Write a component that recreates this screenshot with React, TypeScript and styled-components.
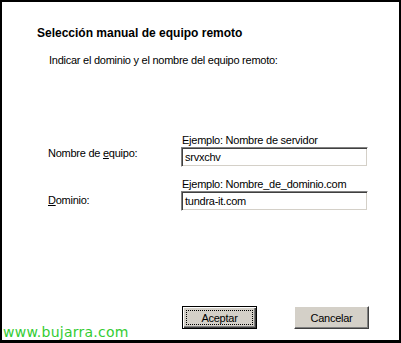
import React from "react";
import styled, { createGlobalStyle } from "styled-components";

const Global = createGlobalStyle`
  html, body { margin: 0; padding: 0; background: #ffffff; }
  body { font-family: "Liberation Sans", Arial, sans-serif; }
`;

const Dialog = styled.div`
  position: relative;
  box-sizing: border-box;
  width: 401px;
  height: 343px;
  border: 2px solid #000;
  border-bottom-width: 3px;
  background: #fff;
  display: flex;
  flex-direction: column;
  padding: 24px 30px 11px 0;
  color: #000;
  font-size: 11px;
  letter-spacing: -0.25px;
`;

const Title = styled.h1`
  margin: 0 0 0 35px;
  font-size: 12px;
  line-height: 14px;
  font-weight: bold;
  letter-spacing: 0;
`;

const Subtitle = styled.p`
  margin: 14px 0 0 47px;
  line-height: 13px;
`;

const Form = styled.div`
  margin: 67px 0 0 46px;
  display: flex;
  flex-direction: column;
  gap: 11px;
`;

const Row = styled.div`
  display: flex;
  align-items: flex-start;
`;

const Label = styled.label<{ $offset: number }>`
  width: 133px;
  line-height: 13px;
  padding-top: ${(p) => p.$offset}px;
`;

const Field = styled.div`
  display: flex;
  flex-direction: column;
  width: 187px;
`;

const Hint = styled.span`
  line-height: 13px;
  padding-left: 1px;
`;

const Edit = styled.div`
  box-sizing: border-box;
  height: 20px;
  border: 1px solid;
  border-color: #808080 #ffffff #ffffff #808080;
  box-shadow: inset 1px 1px #404040, inset -1px -1px #d4d0c8;
  background: #fff;
  padding: 0 3px;
  line-height: 18px;
`;

const Buttons = styled.div`
  margin-top: auto;
  display: flex;
  justify-content: flex-end;
  gap: 37px;
`;

const Button = styled.div<{ $default?: boolean }>`
  box-sizing: border-box;
  width: 75px;
  height: 23px;
  background: #d4d0c8;
  display: flex;
  align-items: center;
  justify-content: center;
  border: 1px solid;
  border-color: ${(p) => (p.$default ? "#000" : "#ffffff #404040 #404040 #ffffff")};
  box-shadow: ${(p) =>
    p.$default
      ? "inset 1px 1px #ffffff, inset -1px -1px #404040, inset -2px -2px #808080"
      : "inset -1px -1px #808080"};
  padding: ${(p) => (p.$default ? "3px" : "0")};
`;

const Focus = styled.span`
  box-sizing: border-box;
  flex: 1;
  align-self: stretch;
  display: flex;
  align-items: center;
  justify-content: center;
  border: 1px dotted #000;
`;

const Watermark = styled.span`
  position: absolute;
  left: 1px;
  bottom: 0;
  font-family: "DejaVu Sans", Verdana, sans-serif;
  font-size: 14px;
  line-height: 16px;
  letter-spacing: 0.25px;
  color: #33cc33;
`;

export default function App() {
  return (
    <>
      <Global />
      <Dialog>
        <Title>Selección manual de equipo remoto</Title>
        <Subtitle>Indicar el dominio y el nombre del equipo remoto:</Subtitle>
        <Form>
          <Row>
            <Label $offset={13}>
              Nombre de <u>e</u>quipo:
            </Label>
            <Field>
              <Hint>Ejemplo: Nombre de servidor</Hint>
              <Edit>srvxchv</Edit>
            </Field>
          </Row>
          <Row>
            <Label $offset={16}>
              <u>D</u>ominio:
            </Label>
            <Field>
              <Hint>Ejemplo: Nombre_de_dominio.com</Hint>
              <Edit>tundra-it.com</Edit>
            </Field>
          </Row>
        </Form>
        <Buttons>
          <Button $default>
            <Focus>Aceptar</Focus>
          </Button>
          <Button>Cancelar</Button>
        </Buttons>
        <Watermark>www.bujarra.com</Watermark>
      </Dialog>
    </>
  );
}
